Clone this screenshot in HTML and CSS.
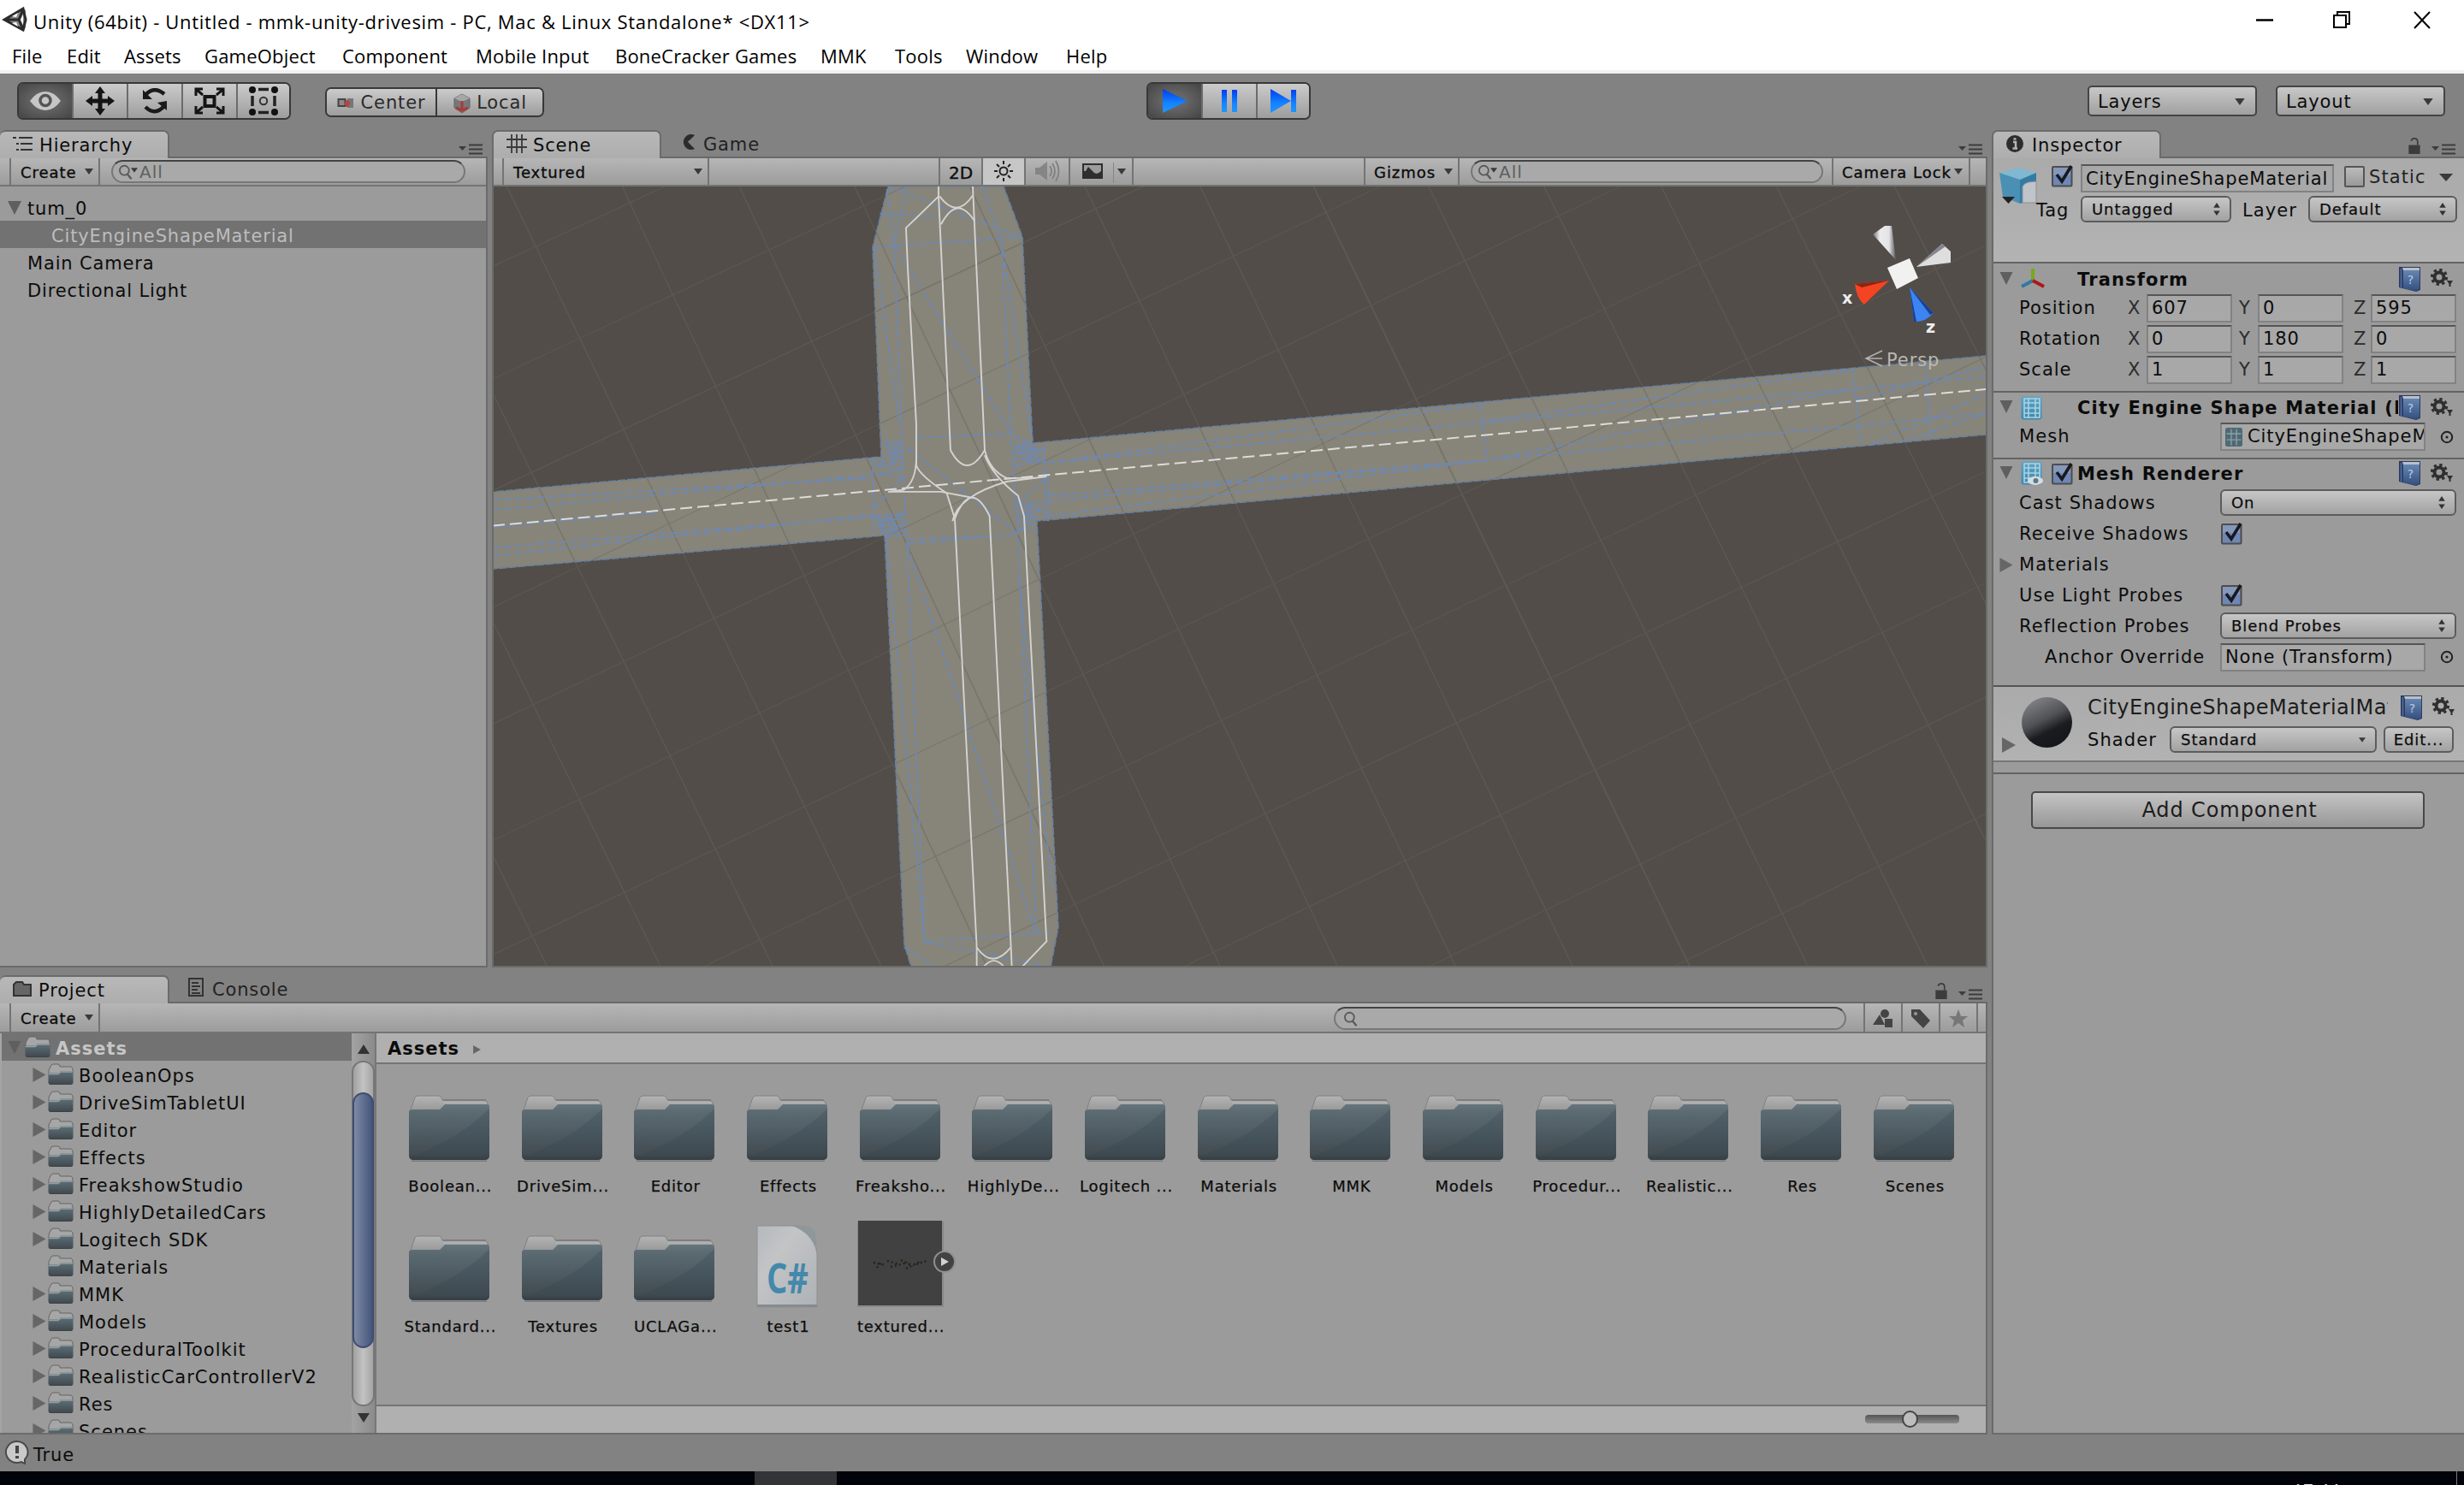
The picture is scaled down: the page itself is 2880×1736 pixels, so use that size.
FILE: index.html
```html
<!DOCTYPE html>
<html lang="en">
<head>
<meta charset="utf-8">
<title>Unity (64bit) - Untitled - mmk-unity-drivesim</title>
<link rel="stylesheet" href="styles.css">
</head>
<body>
<svg class="defs" width="0" height="0">
  <defs>
    <linearGradient id="gFolder" x1="0" y1="0" x2="0" y2="1"><stop offset="0" stop-color="#66757c"/><stop offset=".15" stop-color="#5b6a71"/><stop offset=".6" stop-color="#4b585f"/><stop offset=".9" stop-color="#434c51"/><stop offset="1" stop-color="#333d42"/></linearGradient>
    <linearGradient id="gTab" x1="0" y1="0" x2="0" y2="1"><stop offset="0" stop-color="#b4b4b4"/><stop offset="1" stop-color="#8d8d8d"/></linearGradient>
    <linearGradient id="gBlue" x1="0" y1="0" x2="0" y2="1"><stop offset="0" stop-color="#003cf0"/><stop offset=".6" stop-color="#1484ff"/><stop offset="1" stop-color="#1e96ff"/></linearGradient>
    <linearGradient id="gBook" x1="0" y1="0" x2="0" y2="1"><stop offset="0" stop-color="#6785b0"/><stop offset="1" stop-color="#344f80"/></linearGradient>
    <linearGradient id="gMesh" x1="0" y1="0" x2="0" y2="1"><stop offset="0" stop-color="#5fa4c4"/><stop offset="1" stop-color="#3f86ac"/></linearGradient>
    <linearGradient id="gBall" x1="0.2" y1="0" x2="0.7" y2="1"><stop offset="0" stop-color="#85878a"/><stop offset=".45" stop-color="#505154"/><stop offset=".68" stop-color="#1b1c20"/><stop offset="1" stop-color="#141519"/></linearGradient>
    <linearGradient id="gPage" x1="0" y1="0" x2="1" y2="1"><stop offset="0" stop-color="#b4b9bd"/><stop offset=".35" stop-color="#c3c4c6"/><stop offset="1" stop-color="#adb2b6"/></linearGradient>
    <linearGradient id="gCone" x1="0" y1="0" x2="1" y2="0"><stop offset="0" stop-color="#6c6c74"/><stop offset=".3" stop-color="#ececec"/><stop offset=".7" stop-color="#e4e4e6"/><stop offset="1" stop-color="#55555e"/></linearGradient>
    <symbol id="folder" viewBox="0 0 94 78">
      <path d="M1 20 L7 3 Q8 1 11 1 H35 Q38 1 39 6 H88 Q92 7 93 12 V26 H1Z" fill="url(#gTab)" stroke="#808080"/>
      <path d="M40 6 H90" stroke="#777" stroke-width="1.5"/>
      <path d="M40 9 H91" stroke="#b0b0b0" stroke-width="2"/>
      <path d="M0 19 Q1 17 4 17 H36 L42 11 H91 Q94 11 94 14 V72 Q93 76 89 76 H5 Q1 76 0 72Z" fill="url(#gFolder)"/>
      <path d="M94 16 V72 Q93 76 89 76 H5 Q2 76 1 73 Q60 50 92 18Z" fill="#33454f" opacity=".25"/>
      <path d="M3 77.200 H91" stroke="#7a7a7a" stroke-width="1.5"/>
    </symbol>
    <symbol id="folderS" viewBox="0 0 30 26">
      <path d="M1 8 L4 2 Q5 1 7 1 H12 Q14 1 14 4 H27 Q29 5 29 7 V12 H1Z" fill="#a6a6a6" stroke="#646464"/>
      <path d="M0.500 12 H12 L15 9 H29.500 V23 Q29 25 27 25 H3 Q1 25 .5 23Z" fill="url(#gFolder)"/>
      <path d="M1 12.500 H12 L15 10 H29" fill="none" stroke="#93a1a6" stroke-width="1.500"/>
    </symbol>
    <symbol id="right" viewBox="0 0 16 18"><path d="M0 0 L16 9 L0 18Z" fill="#666"/></symbol>
    <symbol id="down" viewBox="0 0 16 16"><path d="M0 0 H16 L8 16Z" fill="#5f5f5f"/></symbol>
    <symbol id="caret" viewBox="0 0 10 7"><path d="M0 0 H10 L5 7Z" fill="#3a3a3a"/></symbol>
    <symbol id="updown" viewBox="0 0 8 16"><path d="M0 6 L4 0 L8 6Z M0 10 L4 16 L8 10Z" fill="#333"/></symbol>
    <symbol id="menu" viewBox="0 0 28 14"><path d="M0 4 H9 L4.500 9Z" fill="#3c3c3c"/><path d="M12 2.500 H28 M12 7.500 H28 M12 12.500 H28" stroke="#3c3c3c" stroke-width="2.200"/></symbol>
    <symbol id="lock" viewBox="0 0 14 20"><path d="M0 9 H14 V20 H0Z" fill="#3c3c3c"/><path d="M3 4 Q4 1 7 1 Q11 1 11 5 V9" fill="none" stroke="#3c3c3c" stroke-width="1.800"/></symbol>
    <symbol id="mag" viewBox="0 0 24 22"><circle cx="8" cy="9" r="6" fill="none" stroke="#5a5a5a" stroke-width="2"/><path d="M12 14 L17 20" stroke="#5a5a5a" stroke-width="2.500"/></symbol>
    <symbol id="book" viewBox="0 0 26 29"><path d="M1 0 H26 V27 L21 29 L1 24Z" fill="#2b3c60"/><path d="M6 4 H25 V26 L21 28 L6 25Z" fill="url(#gBook)"/><path d="M5 1 H25 V4 H6Z" fill="#b9c0cc"/><path d="M3.500 2 V24" stroke="#5272a5" stroke-width="1.500"/><text x="14.500" y="20" text-anchor="middle" font-family="DejaVu Sans" font-size="14" letter-spacing="0" fill="#b5cbe8">?</text></symbol>
    <symbol id="gear" viewBox="0 0 28 24"><circle cx="10" cy="10" r="5.500" fill="none" stroke="#2f2f2f" stroke-width="4"/><circle cx="10" cy="10" r="8.600" fill="none" stroke="#2f2f2f" stroke-width="3" stroke-dasharray="3.370 3.380"/><path d="M19 14 H26 L23.500 18 V21 H21.500 V18Z" fill="#2f2f2f"/></symbol>
    <symbol id="check" viewBox="0 0 26 26"><rect x="1" y="2" width="22.500" height="22.500" rx="1" fill="#6f87b5" stroke="#4d4d4d" stroke-width="2"/><rect x="2" y="3" width="20" height="9" fill="#8597ba"/><path d="M6 11 L12 19 L23 1" fill="none" stroke="#17191f" stroke-width="3.600"/></symbol>
    <symbol id="mesh" viewBox="0 0 26 28"><rect x=".5" y=".5" width="24" height="27" rx="3" fill="url(#gMesh)"/><path d="M4 8 H22 M4 14 H22 M4 20 H22 M9 3 V26 M17 3 V26 M4 3 H22 V25 H4Z" stroke="#a9d3e4" stroke-width="1.600" fill="none"/></symbol>
    <symbol id="target" viewBox="0 0 16 16"><circle cx="8" cy="8" r="6.200" fill="none" stroke="#222" stroke-width="2"/><circle cx="8" cy="8" r="1.600" fill="#222"/></symbol>
  </defs>
</svg>

<header class="window-head">
  <div class="title-row">
    <svg class="logo" width="32" height="32" viewBox="0 0 32 32"><path d="M2 16 L24 3 L28 5 V25 L26 29 L22 28Z" fill="#8b8b8b"/><path d="M3 16 L25 3 L28 16 L25 28Z M3 16 H20 L25 4 M20 16 L25 28" fill="none" stroke="#2b2b2b" stroke-width="3"/><path d="M12 12 L19 8 L17 13Z M12 20 L19 24 L17 19Z M22 16 L25 10 V22Z" fill="#fff"/></svg>
    <span class="title">Unity (64bit) - Untitled - mmk-unity-drivesim - PC, Mac &amp; Linux Standalone* &lt;DX11&gt;</span>
    <svg class="winctl" width="210" height="24" viewBox="2634 10 210 24"><path d="M2637 22.500 H2657" stroke="#000" stroke-width="2.500"/><path d="M2728 17 H2742 V31 H2728Z M2732 17 V13 H2746 V27 H2742" fill="none" stroke="#000" stroke-width="2"/><path d="M2822 13 L2840 32 M2840 13 L2822 32" stroke="#000" stroke-width="2"/></svg>
  </div>
  <nav class="menus"><span>File</span><span>Edit</span><span>Assets</span><span>GameObject</span><span>Component</span><span>Mobile Input</span><span>BoneCracker Games</span><span>MMK</span><span>Tools</span><span>Window</span><span>Help</span></nav>
</header>

<div class="main-bar">
  <div class="group tools">
    <span class="btn on"><svg width="38" height="28" viewBox="0 0 38 28"><path d="M1 14 Q9 3 19 3 Q29 3 37 14 Q29 25 19 25 Q9 25 1 14Z" fill="#c6c6c6"/><circle cx="19" cy="13.500" r="6" fill="none" stroke="#555" stroke-width="3.500"/></svg></span>
    <span class="btn"><svg width="34" height="34" viewBox="0 0 34 34"><path d="M17 0 L23 8 H19.500 V14.500 H26 V11 L34 17 L26 23 V19.500 H19.500 V26 H23 L17 34 L11 26 H14.500 V19.500 H8 V23 L0 17 L8 11 V14.500 H14.500 V8 H11Z" fill="#151515"/></svg></span>
    <span class="btn"><svg width="32" height="30" viewBox="0 0 32 30"><path d="M5 8 Q15 -3 27 7 M5 22 Q16 33 27 21" fill="none" stroke="#1a1a1a" stroke-width="4.500"/><path d="M2 2 V13 H13Z M30 15 V26 L19 17Z" fill="#1a1a1a"/></svg></span>
    <span class="btn"><svg width="36" height="32" viewBox="0 0 36 32"><rect x="12.500" y="11" width="11" height="11" fill="none" stroke="#151515" stroke-width="4"/><path d="M2 10 V2 H10 M26 2 H34 V10 M2 22 V30 H10 M26 30 H34 V22 M3 3 L10 9 M33 3 L26 9 M3 29 L10 23 M33 29 L26 23" stroke="#151515" stroke-width="3" fill="none"/></svg></span>
    <span class="btn"><svg width="34" height="34" viewBox="0 0 34 34"><path d="M11 3.500 H23 M11 30.500 H23 M4 11 V23 M30 11 V23" fill="none" stroke="#222" stroke-width="3.500"/><circle cx="4" cy="4" r="4" fill="#111"/><circle cx="30" cy="4" r="4" fill="#111"/><circle cx="4" cy="30" r="4" fill="#111"/><circle cx="30" cy="30" r="4" fill="#111"/><circle cx="17" cy="17" r="4.200" fill="none" stroke="#333" stroke-width="2"/></svg></span>
  </div>
  <div class="group pivot">
    <span class="btn w-center"><svg width="22" height="16" viewBox="0 0 22 16"><rect x="1.500" y="3" width="8" height="8" fill="#8b8b8b" stroke="#444" stroke-width="2"/><rect x="12" y="2" width="7" height="11" fill="#777"/><path d="M12 4 V12 M8 8 H15" stroke="#b34343" stroke-width="3"/></svg>Center</span><span class="btn w-local"><svg width="22" height="26" viewBox="0 0 22 26"><path d="M2 7 L11 2 L20 7 V18 L11 24 L2 18Z" fill="#777" stroke="#666"/><path d="M2 7 L11 2 L20 7 L11 11Z" fill="#a6a6a6"/><path d="M11 10 V19 M4 18 L11 21 L18 18" stroke="#a63c3c" stroke-width="3" fill="none"/></svg>Local</span>
  </div>
  <div class="group play">
    <span class="btn on"><svg width="32" height="30" viewBox="0 0 32 30"><path d="M2 1 L31 15 L2 29Z" fill="url(#gBlue)"/></svg></span>
    <span class="btn"><svg width="20" height="28" viewBox="0 0 20 28"><path d="M1 1 H7 V27 H1Z M13 1 H19 V27 H13Z" fill="url(#gBlue)"/></svg></span>
    <span class="btn"><svg width="32" height="30" viewBox="0 0 32 30"><path d="M1 1 L25 15 L1 29Z M25 2 H31 V28 H25Z" fill="url(#gBlue)"/></svg></span>
  </div>
  <div class="drops"><span class="drop">Layers<svg width="12" height="8"><use href="#caret"/></svg></span><span class="drop">Layout<svg width="12" height="8"><use href="#caret"/></svg></span></div>
</div>

<main class="work">
  <div class="left">
    <div class="upper">
      <section class="panel hierarchy">
        <div class="tabs"><span class="tab w196"><svg width="24" height="18" viewBox="0 0 24 18"><path d="M0 2 H4 M7 2 H23 M4 9 H7 M9 9 H23 M4 16 H7 M9 16 H23" stroke="#333" stroke-width="2"/></svg><b class="t">Hierarchy</b></span><svg class="pm" width="28" height="14"><use href="#menu"/></svg></div>
        <div class="strip"><span class="cell create">Create<svg width="10" height="7"><use href="#caret"/></svg></span><span class="search hs"><svg width="22" height="20"><use href="#mag"/></svg><svg class="mc" width="8" height="6"><use href="#caret"/></svg>All</span></div>
        <div class="list">
          <div class="item"><svg width="16" height="16"><use href="#down"/></svg><span>tum_0</span></div>
          <div class="item sel"><span>CityEngineShapeMaterial</span></div>
          <div class="item flat"><span>Main Camera</span></div>
          <div class="item flat"><span>Directional Light</span></div>
        </div>
      </section>
      <section class="panel scene">
        <div class="tabs"><span class="tab w196"><svg width="24" height="24" viewBox="0 0 24 24"><path d="M6 1 V23 M12 1 V23 M18 1 V23 M0 7 H24 M0 16 H24" stroke="#3a3a3a" stroke-width="1.800"/></svg><b class="t">Scene</b></span><span class="tab ghost"><svg width="18" height="20" viewBox="0 0 18 20"><path d="M17 2 A9 9 0 1 0 17 18 L10 11 Q8 9 11 8Z" fill="#2c2c2c"/></svg><b class="t">Game</b></span><svg class="pm" width="28" height="14"><use href="#menu"/></svg></div>
        <div class="strip">
          <span class="cell shade">Textured<svg width="10" height="7"><use href="#caret"/></svg></span>
          <span class="cell c2d">2D</span>
          <span class="cell lit"><svg width="24" height="24" viewBox="0 0 24 24"><circle cx="12" cy="12" r="4.500" fill="none" stroke="#222" stroke-width="2"/><path d="M12 0 V4 M12 20 V24 M1 12 H5 M19 12 H23 M4 4 L7 7 M17 17 L20 20 M4 20 L7 17 M17 7 L20 4" stroke="#222" stroke-width="2"/></svg></span>
          <span class="cell c52"><svg width="30" height="26" viewBox="0 0 30 26"><path d="M1 9 H6 L15 2 V24 L6 17 H1Z" fill="#858585"/><path d="M18 7 Q22 13 18 19 M21 4 Q27 13 21 22 M25 1 Q32 13 25 25" fill="none" stroke="#808080" stroke-width="1.800"/></svg></span>
          <span class="cell fx"><svg width="24" height="18" viewBox="0 0 24 18"><rect width="24" height="18" fill="#2e2e2e"/><path d="M2 2 H22 V9 Q16 15 12 9 L7 4 L4 9 H2Z" fill="#9c9c9c"/></svg><i></i><svg width="10" height="7"><use href="#caret"/></svg></span>
          <span class="cell giz">Gizmos<svg width="10" height="7"><use href="#caret"/></svg></span>
          <span class="search ss"><svg width="22" height="20"><use href="#mag"/></svg><svg class="mc" width="8" height="6"><use href="#caret"/></svg>All</span>
          <span class="cell cam">Camera Lock<svg width="10" height="7"><use href="#caret"/></svg></span>
        </div>
        <svg class="view" viewBox="577 218 1744 911" width="1744" height="911" preserveAspectRatio="none">
          <rect x="576" y="218" width="1746" height="911" fill="#524d48"/>
          <defs>
            <g id="grid" fill="none">
              <path d="M-335 30 L62 1568 M-215 30 L180 1568 M-100 30 L297 1568 M20 30 L410 1568 M140 30 L520 1568 M262 30 L642 1568 M382 30 L763 1568 M502 30 L885 1568 M622 30 L1008 1568 M742 30 L1130 1568 M980 30 L1375 1568 M1100 30 L1500 1568 M1222 30 L1625 1568 M1342 30 L1750 1568 M1465 30 L1870 1568"/>
              <path d="M860 30 L1252 1568" stroke-width="2"/>
              <path d="M5 188 L185 30 M5 410 L435 30 M5 860 L930 30 M5 1090 L1180 30 M5 1320 L1430 30 M5 1545 L1562 145 M225 1568 L1562 365 M475 1568 L1562 590 M725 1568 L1562 810 M980 1568 L1562 1035 M1235 1568 L1562 1265"/>
              <path d="M5 630 L683 30" stroke-width="2"/>
            </g>
            <path id="roads" d="M1038 218 H1173 L1195 277 L1207 518 L2322 416 V508 L1212 609 L1237 1084 L1228 1130 H1065 L1057 1104 L1034 626 L576 665 V575 L1030 534 L1020 289Z"/>
            <clipPath id="roadClip"><use href="#roads"/></clipPath>
          </defs>
          <g transform="translate(570 200) scale(1.1224 .5931)" stroke="#5c5852" class="thin"><use href="#grid"/></g>
          <use href="#roads" fill="#87847a"/>
          <g clip-path="url(#roadClip)">
            <g transform="translate(570 200) scale(1.1224 .5931)" stroke="#777469" class="thin"><use href="#grid"/></g>
          </g>
          <use href="#roads" fill="none" stroke="#69809f" stroke-width="1.600" stroke-dasharray="9 2"/>
          <g class="blue" transform="translate(960 200) scale(.3333 .5931)" fill="none">
            <path d="M300 30 L255 145 L285 560 L300 735 L362 1520 M565 30 L632 135 L665 518 L690 725 L753 1505"/>
            <path d="M185 150 L272 490 M632 135 L740 530 M228 725 L362 1520 M692 800 L810 1420 M232 30 L700 130"/>
            <path d="M185 150 L700 130 M205 85 L410 90 M335 525 L665 518 M300 735 L690 715 M300 725 L560 720 M362 1520 L800 1500 M362 1520 L800 1568"/>
            <path d="M255 145 L665 515 M300 545 L690 715 M300 735 L753 1505 M230 35 L255 145 M180 565 L185 720 M783 540 L785 688 M795 600 L795 690"/>
            <path d="M215 530 L285 535 L225 545 L290 550 L222 558 L285 565 L175 572 L290 575 L185 582 L285 588 L190 598 L290 603 M670 520 L745 540 L672 545 L783 548 L675 555 L783 562 L675 568 L783 572 L675 580 M185 680 L295 675 L190 690 L290 685 L190 700 L298 696 L205 710 L300 706 L215 720 L300 718 M683 650 L770 655 L685 662 L780 668 L685 675 L760 682 L685 690 L755 696 L690 705 L750 710"/>
            <path d="M230 535 L240 560 L250 535 L262 570 L272 535 M690 525 L700 560 L715 530 L730 575 L745 540 L765 575 M200 680 L215 712 L230 680 L250 715 L270 680 M700 655 L712 700 L730 655 L745 690"/>
            <path d="M183 665 L283 605 M683 660 L783 605 M290 1530 L400 1568"/>
          </g>
          <g class="blue" transform="translate(570 200) scale(1.1224 .5931)" fill="none">
            <path d="M5 648 L400 605 M5 668 L400 600 M5 702 L180 672 M5 742 L410 680 M5 758 L400 678"/>
            <path d="M583 575 L1560 405 M583 575 L1035 460 M583 650 L1560 478 M583 640 L1040 570 L1420 430 M583 680 L1040 570 M1033 458 L1041 570 M1041 492 L1420 392 M1421 388 L1430 540 M1497 378 L1503 525 M1440 540 L1560 440 M1470 535 L1560 478 M1425 450 L1560 385"/>
          </g>
          <path d="M576 614.600 L2322 455" stroke="#dddcd8" stroke-width="2" stroke-dasharray="14 6"/>
          <g class="white" transform="translate(960 200) scale(.3333 .5931)" fill="none">
            <path d="M411 30 V50 L297 112 L303 190 L333 500 V580 Q345 600 440 635 L468 685 L545 1530 V1568"/>
            <path d="M333 560 Q335 610 290 628 L235 632 M411 48 L453 550 Q510 610 573 550 L531 30"/>
            <path d="M415 50 Q475 95 531 48 M420 105 Q475 45 537 98"/>
            <path d="M573 550 Q590 590 650 605 L740 605 M573 560 Q600 600 690 640 L711 680 L787 1490 L790 1518 L705 1568"/>
            <path d="M468 685 Q525 605 590 680 L665 1530 L668 1568 M460 690 Q480 640 650 612 L790 602 M235 632 H420 L540 645 M545 1530 Q600 1575 665 1530 M570 1568 Q605 1545 640 1568"/>
          </g>
          <path d="M2189 274 L2203 264 H2211 L2216 304Z" fill="url(#gCone)"/>
          <path d="M2240 312 L2270 285 L2280 294 V307Z" fill="#dededf"/><path d="M2240 312 L2270 285 L2274 288Z" fill="#85858c"/>
          <path d="M2206 313 L2232 302 L2242 325 L2217 338Z" fill="#f1f1f0"/>
          <path d="M2168 332 L2208 328 L2179 356 Q2170 349 2168 332Z" fill="#f44423"/><path d="M2168 332 L2208 328 L2176 336Z M2208 328 L2184 351 L2179 356Z" fill="#8f2412"/>
          <path d="M2232 336 L2260 366 Q2250 377 2237 376Z" fill="#3c84f2"/><path d="M2232 336 L2260 366 L2256 368Z M2232 336 L2237 376 L2240 376Z" fill="#1b3f91"/>
          <text x="2153" y="355" font-family="DejaVu Sans" font-weight="bold" font-size="19" fill="#eee">x</text>
          <text x="2251" y="389" font-family="DejaVu Sans" font-weight="bold" font-size="19" fill="#eee">z</text>
          <path d="M2200 410 L2181 419 L2200 428 M2181 419 H2200" fill="none" stroke="#b5b3af" stroke-width="1.500"/>
          <text x="2205" y="428" font-family="DejaVu Sans" font-size="21" letter-spacing=".9" fill="#b9b8b4">Persp</text>
        </svg>
      </section>
    </div>

    <section class="panel project">
      <div class="tabs"><span class="tab w196"><svg width="22" height="18" viewBox="0 0 22 18"><path d="M1 4 L4 1 H11 L13 4 H21 V17 H1Z" fill="#666" stroke="#333" stroke-width="2"/></svg><b class="t">Project</b></span><span class="tab ghost con"><svg width="18" height="22" viewBox="0 0 18 22"><path d="M1 1 H17 V21 H1Z M4 6 H12 M4 10 H14 M4 14 H11 M4 18 H14" fill="none" stroke="#333" stroke-width="2"/></svg><b class="t">Console</b></span><svg class="lk" width="14" height="19"><use href="#lock"/></svg><svg class="pm nm" width="28" height="14"><use href="#menu"/></svg></div>
      <div class="strip"><span class="cell create">Create<svg width="10" height="7"><use href="#caret"/></svg></span>
        <span class="search ps"><svg width="22" height="20"><use href="#mag"/></svg></span>
        <span class="cell sq"><svg width="24" height="24" viewBox="0 0 24 24"><circle cx="14" cy="6" r="5" fill="#444"/><path d="M0 19 L8 7 L14 19Z M14 12 H23 V22 H14Z" fill="#444"/></svg></span>
        <span class="cell sq"><svg width="24" height="24" viewBox="0 0 24 24"><path d="M1 1 H11 L23 14 L15 23 L1 9Z" fill="#444"/><circle cx="6" cy="6" r="2" fill="#999"/></svg></span>
        <span class="cell sq last"><svg width="24" height="22" viewBox="0 0 24 22"><path d="M12 0 L15 8 H23 L17 13 L19 21 L12 16 L5 21 L7 13 L1 8 H9Z" fill="#777"/></svg></span>
      </div>
      <div class="proj-body">
        <div class="tree">
          <div class="node root"><svg width="16" height="15"><use href="#down"/></svg><svg width="30" height="26"><use href="#folderS"/></svg><b>Assets</b></div>
          <div class="node"><svg width="16" height="17"><use href="#right"/></svg><svg width="30" height="26"><use href="#folderS"/></svg><span>BooleanOps</span></div>
          <div class="node"><svg width="16" height="17"><use href="#right"/></svg><svg width="30" height="26"><use href="#folderS"/></svg><span>DriveSimTabletUI</span></div>
          <div class="node"><svg width="16" height="17"><use href="#right"/></svg><svg width="30" height="26"><use href="#folderS"/></svg><span>Editor</span></div>
          <div class="node"><svg width="16" height="17"><use href="#right"/></svg><svg width="30" height="26"><use href="#folderS"/></svg><span>Effects</span></div>
          <div class="node"><svg width="16" height="17"><use href="#right"/></svg><svg width="30" height="26"><use href="#folderS"/></svg><span>FreakshowStudio</span></div>
          <div class="node"><svg width="16" height="17"><use href="#right"/></svg><svg width="30" height="26"><use href="#folderS"/></svg><span>HighlyDetailedCars</span></div>
          <div class="node"><svg width="16" height="17"><use href="#right"/></svg><svg width="30" height="26"><use href="#folderS"/></svg><span>Logitech SDK</span></div>
          <div class="node"><svg width="16" height="17"></svg><svg width="30" height="26"><use href="#folderS"/></svg><span>Materials</span></div>
          <div class="node"><svg width="16" height="17"><use href="#right"/></svg><svg width="30" height="26"><use href="#folderS"/></svg><span>MMK</span></div>
          <div class="node"><svg width="16" height="17"><use href="#right"/></svg><svg width="30" height="26"><use href="#folderS"/></svg><span>Models</span></div>
          <div class="node"><svg width="16" height="17"><use href="#right"/></svg><svg width="30" height="26"><use href="#folderS"/></svg><span>ProceduralToolkit</span></div>
          <div class="node"><svg width="16" height="17"><use href="#right"/></svg><svg width="30" height="26"><use href="#folderS"/></svg><span>RealisticCarControllerV2</span></div>
          <div class="node"><svg width="16" height="17"><use href="#right"/></svg><svg width="30" height="26"><use href="#folderS"/></svg><span>Res</span></div>
          <div class="node"><svg width="16" height="17"><use href="#right"/></svg><svg width="30" height="26"><use href="#folderS"/></svg><span>Scenes</span></div>
        </div>
        <div class="scroll"><svg width="14" height="11" viewBox="0 0 14 11"><path d="M0 11 H14 L7 0Z" fill="#333"/></svg><div class="track"><div class="thumb"></div></div><svg width="14" height="11" viewBox="0 0 14 11"><path d="M0 0 H14 L7 11Z" fill="#333"/></svg></div>
        <div class="files">
          <div class="crumb"><b>Assets</b><svg width="11" height="10"><use href="#right"/></svg></div>
          <div class="tiles">
            <div class="tile"><svg width="94" height="78"><use href="#folder"/></svg><span>Boolean...</span></div>
            <div class="tile"><svg width="94" height="78"><use href="#folder"/></svg><span>DriveSim...</span></div>
            <div class="tile"><svg width="94" height="78"><use href="#folder"/></svg><span>Editor</span></div>
            <div class="tile"><svg width="94" height="78"><use href="#folder"/></svg><span>Effects</span></div>
            <div class="tile"><svg width="94" height="78"><use href="#folder"/></svg><span>Freaksho...</span></div>
            <div class="tile"><svg width="94" height="78"><use href="#folder"/></svg><span>HighlyDe...</span></div>
            <div class="tile"><svg width="94" height="78"><use href="#folder"/></svg><span>Logitech ...</span></div>
            <div class="tile"><svg width="94" height="78"><use href="#folder"/></svg><span>Materials</span></div>
            <div class="tile"><svg width="94" height="78"><use href="#folder"/></svg><span>MMK</span></div>
            <div class="tile"><svg width="94" height="78"><use href="#folder"/></svg><span>Models</span></div>
            <div class="tile"><svg width="94" height="78"><use href="#folder"/></svg><span>Procedur...</span></div>
            <div class="tile"><svg width="94" height="78"><use href="#folder"/></svg><span>Realistic...</span></div>
            <div class="tile"><svg width="94" height="78"><use href="#folder"/></svg><span>Res</span></div>
            <div class="tile"><svg width="94" height="78"><use href="#folder"/></svg><span>Scenes</span></div>
            <div class="tile"><svg width="94" height="78"><use href="#folder"/></svg><span>Standard...</span></div>
            <div class="tile"><svg width="94" height="78"><use href="#folder"/></svg><span>Textures</span></div>
            <div class="tile"><svg width="94" height="78"><use href="#folder"/></svg><span>UCLAGa...</span></div>
            <div class="tile"><svg width="72" height="98" viewBox="0 0 72 98"><path d="M1 1 H50 Q64 1 68 8 L71 34 V96 H1Z" fill="url(#gPage)" stroke="#8c8f91"/><path d="M42 1 Q62 1 68 6 L70 32 Q66 10 42 1Z" fill="#8e979c"/><path d="M1 94.500 H71" stroke="#858b8f" stroke-width="3"/><text x="12" y="80" class="cs" textLength="49" lengthAdjust="spacingAndGlyphs" fill="#4488ab">C#</text></svg><span>test1</span></div>
            <div class="tile"><svg class="tex" width="116" height="104" viewBox="0 0 116 104"><rect x="1" y="2" width="101" height="100" fill="#8a8a8a"/><rect x="2" y="1" width="98" height="99" fill="#414141"/><path d="M20 50 L34 53 M36 48 L50 52 M40 55 L60 50 M52 47 L66 54 M58 57 L74 49 M70 52 L82 48 M24 56 L30 49" stroke="#24241b" stroke-width="2.500" stroke-dasharray="2 3"/><circle cx="103" cy="49" r="12" fill="#424242" stroke="#8f8f8f" stroke-width="2"/><path d="M99 44 L108 49 L99 54Z" fill="#d2d2d2"/></svg><span>textured...</span></div>
          </div>
          <div class="foot"><div class="slider"><i></i></div></div>
        </div>
      </div>
    </section>
  </div>

  <section class="panel inspector">
    <div class="tabs"><span class="tab w196"><svg width="20" height="20" viewBox="0 0 20 20"><circle cx="10" cy="10" r="10" fill="#2d2d2d"/><path d="M8 8 H11 V15 M7.500 15.500 H13 M8.500 4.500 H11.500" stroke="#b5b5b5" stroke-width="2.500" fill="none"/></svg><b class="t">Inspector</b></span><svg class="lk" width="14" height="19"><use href="#lock"/></svg><svg class="pm nm" width="28" height="14"><use href="#menu"/></svg></div>
    <div class="obj">
      <div class="cube"><svg width="46" height="44" viewBox="0 0 46 44"><path d="M0 6 L22 0 L43 6 L24 14Z" fill="#7fb8d0"/><path d="M0 6 L24 14 V42 L4 34Z" fill="#4a90b4"/><path d="M24 14 L43 6 V36 L24 42Z" fill="#347ba3"/><path d="M27 22 Q29 18 34 17 L43 16 V41 H27Z" fill="#c0c4c9" stroke="#8a9096"/><path d="M3 34 H18 L10.500 42Z" fill="#222"/></svg></div>
      <div class="obj-main">
        <div class="orow"><svg width="26" height="26"><use href="#check"/></svg><span class="input oname">CityEngineShapeMaterial</span><span class="box"></span><span class="lab">Static</span><svg class="sc" width="16" height="9" viewBox="0 0 10 7" preserveAspectRatio="none"><use href="#caret"/></svg></div>
        <div class="orow2"><span class="lab tag">Tag</span><span class="select s176">Untagged<svg width="8" height="15"><use href="#updown"/></svg></span><span class="lab lay">Layer</span><span class="select s174">Default<svg width="8" height="15"><use href="#updown"/></svg></span></div>
      </div>
    </div>
    <div class="comp tr">
      <div class="ctitle"><svg width="16" height="15"><use href="#down"/></svg><span class="ci"><svg width="28" height="26" viewBox="0 0 28 26"><path d="M14 1 V15" stroke="#78a81c" stroke-width="4"/><path d="M14 15 L1 22" stroke="#2f79a6" stroke-width="4"/><path d="M14 15 L27 22" stroke="#b01616" stroke-width="4"/></svg></span><b>Transform</b><svg width="26" height="29"><use href="#book"/></svg><svg width="28" height="24"><use href="#gear"/></svg></div>
      <div class="vec"><span>Position</span><em>X</em><span class="input">607</span><em>Y</em><span class="input">0</span><em>Z</em><span class="input">595</span></div>
      <div class="vec"><span>Rotation</span><em>X</em><span class="input">0</span><em>Y</em><span class="input">180</span><em>Z</em><span class="input">0</span></div>
      <div class="vec"><span>Scale</span><em>X</em><span class="input">1</span><em>Y</em><span class="input">1</span><em>Z</em><span class="input">1</span></div>
    </div>
    <div class="comp mf">
      <div class="ctitle"><svg width="16" height="15"><use href="#down"/></svg><span class="ci"><svg width="26" height="28"><use href="#mesh"/></svg></span><b>City Engine Shape Material (Mesh Filter)</b><svg width="26" height="29"><use href="#book"/></svg><svg width="28" height="24"><use href="#gear"/></svg></div>
      <div class="prop"><span>Mesh</span><span class="input obj-in"><svg width="20" height="22" viewBox="0 0 26 28" preserveAspectRatio="none"><rect width="26" height="28" rx="3" fill="#4f6974"/><path d="M9 2 V26 M17 2 V26 M2 9 H24 M2 18 H24" stroke="#8ba0a8" stroke-width="1.800"/></svg>CityEngineShapeMaterial</span><svg width="16" height="16"><use href="#target"/></svg></div>
    </div>
    <div class="comp mr">
      <div class="ctitle"><svg width="16" height="15"><use href="#down"/></svg><span class="ci"><svg width="26" height="29" viewBox="0 0 26 29"><use href="#mesh" width="26" height="28"/><ellipse cx="17" cy="23" rx="9" ry="5" fill="#d5dde2"/><circle cx="17.500" cy="23" r="3" fill="#5c7886"/></svg><svg class="ck" width="26" height="26"><use href="#check"/></svg></span><b>Mesh Renderer</b><svg width="26" height="29"><use href="#book"/></svg><svg width="28" height="24"><use href="#gear"/></svg></div>
      <div class="prop"><span>Cast Shadows</span><span class="select wide">On<svg width="8" height="15"><use href="#updown"/></svg></span></div>
      <div class="prop"><span>Receive Shadows</span><svg class="cb" width="26" height="26"><use href="#check"/></svg></div>
      <div class="prop fold"><svg width="16" height="17"><use href="#right"/></svg><span>Materials</span></div>
      <div class="prop"><span>Use Light Probes</span><svg class="cb" width="26" height="26"><use href="#check"/></svg></div>
      <div class="prop"><span>Reflection Probes</span><span class="select wide">Blend Probes<svg width="8" height="15"><use href="#updown"/></svg></span></div>
      <div class="prop"><span class="ind">Anchor Override</span><span class="input obj-in">None (Transform)</span><svg width="16" height="16"><use href="#target"/></svg></div>
    </div>
    <div class="mat">
      <svg class="mfold" width="16" height="18"><use href="#right"/></svg>
      <svg class="ball" width="61" height="61" viewBox="0 0 61 61"><circle cx="30.500" cy="30.500" r="29.500" fill="url(#gBall)"/></svg>
      <div class="mat-main">
        <div class="mrow"><span class="mname">CityEngineShapeMaterialMaterial</span><svg width="26" height="29"><use href="#book"/></svg><svg width="28" height="24"><use href="#gear"/></svg></div>
        <div class="mrow2"><span class="lab">Shader</span><span class="select shader">Standard<svg width="8" height="6"><use href="#caret"/></svg></span><span class="select edit">Edit...</span></div>
      </div>
    </div>
    <div class="gapbar"></div>
    <div class="add">Add Component</div>
  </section>
</main>

<footer class="status"><svg width="30" height="28" viewBox="0 0 30 28"><path d="M15 1 A13 12.500 0 1 0 20 25 L24 27 V22 A13 12.500 0 0 0 15 1Z" fill="#c9c9c9" stroke="#4a4a4a" stroke-width="2"/><path d="M15 6 V15 M15 18 V21" stroke="#444" stroke-width="4"/></svg>True</footer>
<div class="taskbar"><span class="active"></span><span class="clock">17:44</span><span class="edge"></span></div>
</body>
</html>
```
FILE: styles.css
```css
* { box-sizing: border-box; }
html, body { margin: 0; padding: 0; }
body { width: 2880px; height: 1736px; overflow: hidden; display: flex; flex-direction: column; background: #828282; font: 21px/1 "DejaVu Sans", sans-serif; letter-spacing: .85px; color: #0c0c0c; white-space: nowrap; }
svg { display: block; flex: none; }
.defs { position: absolute; }
b { font-weight: bold; }
em { font-style: normal; color: #2c2c2c; }

.window-head { height: 86px; flex: none; background: #fff; border-bottom: 4px solid #f0f0f0; font-family: "Open Sans", "Noto Sans", sans-serif; font-size: 22px; letter-spacing: 0; color: #000; }
.title-row { height: 48px; display: flex; align-items: center; padding: 0 36px 3px 2px; }
.title { margin-left: 5px; padding-top: 4px; letter-spacing: .7px; }
.winctl { margin-left: auto; }
.menus { height: 34px; padding-left: 14px; display: grid; grid-template-columns: 64px 67px 94px 161px 156px 163px 240px 87px 83px 117px 80px; align-items: center; letter-spacing: .2px; }

.main-bar { height: 65px; flex: none; display: grid; grid-template-columns: 360px 960px 1100px 1fr; padding: 10px 0 0 20px; align-items: start; }
.group { display: flex; border: 2px solid #383838; border-radius: 7px; overflow: hidden; width: max-content; }
.btn { display: flex; align-items: center; justify-content: center; background: linear-gradient(#cbcbcb, #9d9d9d); border-left: 2px solid #6b6b6b; }
.btn:first-child { border-left: 0; }
.btn.on { background: radial-gradient(#666 30%, #444); }
.tools .btn { width: 64px; height: 40px; }
.tools .btn:last-child, .tools .btn:first-child { width: 62px; }
.pivot { margin-top: 6px; }
.pivot .btn { height: 31px; gap: 6px; color: #2a2a2a; padding-top: 2px; }
.w-center { width: 127px; }
.pivot .w-local { width: 125px; border-color: #383838; }
.play .btn { width: 64px; height: 40px; }
.play .btn:first-child { width: 62px; }
.play .btn:last-child { width: 62px; }
.drops { display: flex; gap: 22px; padding-top: 4px; }
.drop { width: 198px; height: 36px; border: 2px solid #444; border-radius: 5px; background: linear-gradient(#c8c8c8, #a0a0a0); display: flex; align-items: center; justify-content: space-between; padding: 2px 12px 0 10px; }

.work { height: 1526px; flex: none; display: flex; gap: 5px; }
.left { width: 2323px; display: flex; flex-direction: column; gap: 8px; }
.upper { height: 980px; display: flex; gap: 5px; }
.panel { display: flex; flex-direction: column; background: #9b9b9b; border: 2px solid #6b6b6b; border-top: 0; }
.tabs { height: 34px; flex: none; display: flex; align-items: flex-end; background: #828282; border-bottom: 2px solid #696969; margin: 0 -2px; padding-right: 6px; }
.tab { height: 32px; display: flex; align-items: center; gap: 9px; padding-left: 15px; }
.tab.w196 { width: 198px; height: 33px; margin-bottom: -2px; background: linear-gradient(#b8b8b8, #adadad); border: 2px solid #6b6b6b; border-bottom: 0; border-radius: 7px 7px 0 0; }
.t { font-weight: normal; padding-top: 2px; }
.tab svg { margin-top: -3px; }
.ghost { color: #222; padding-left: 22px; }
.ghost .t { padding-top: 5px; }
.pm { margin-left: auto; margin-bottom: 2px; }
.lk { margin-left: auto; margin-bottom: 3px; }
.pm.nm { margin-left: 13px; }
.strip { height: 33px; flex: none; display: flex; background: linear-gradient(#b6b6b6, #9c9c9c); border-bottom: 2px solid #747474; font-size: 18px; letter-spacing: .95px; -webkit-text-stroke: .35px #0c0c0c; }
.cell { display: flex; align-items: center; justify-content: space-between; border-left: 2px solid #747474; border-right: 2px solid #747474; padding: 3px 6px 0 11px; }
.cell svg { margin-top: -4px; }
.search { height: 27px; margin-top: 2px; border: 2px solid #777; border-top-color: #444; border-radius: 14px; background: #a9a9a9; display: flex; align-items: center; padding-left: 6px; color: #5f5f5f; font-size: 20px; letter-spacing: 1px; -webkit-text-stroke: 0; }
.mc { margin: -4px 2px 0 -7px; }

.hierarchy { width: 570px; border-left: 0; }
.hierarchy .tabs { margin-left: 0; }
.hierarchy .tab { border-left: 0; gap: 7px; }
.create { width: 106px; margin-left: 11px; }
.hs { width: 414px; margin-left: 13px; }
.list { padding-top: 8px; }
.item { height: 32px; display: flex; align-items: center; padding: 4px 0 0 9px; gap: 7px; }
.item svg { margin-top: -3px; }
.item.flat { padding-left: 32px; }
.item.sel { padding-left: 60px; background: #727272; color: #bdbdbd; }

.scene { width: 1748px; }
.scene .tab.w196 { gap: 7px; }
.shade { width: 242px; margin-left: 10px; }
.c2d { width: 52px; margin-left: 268px; font-size: 20px; padding: 2px 0 0; justify-content: center; letter-spacing: 0; }
.lit { width: 52px; margin-left: -2px; background: #c6c6c6; padding: 3px 0 0; justify-content: center; }
.c52 { width: 54px; margin-left: -2px; padding: 3px 0 0; justify-content: center; }
.fx { width: 76px; margin-left: -2px; padding: 3px 7px 0 14px; }
.fx i { width: 1px; height: 24px; background: #858585; margin-left: 8px; }
.giz { width: 112px; margin-left: 269px; padding-left: 10px; }
.ss { width: 412px; margin-left: 13px; }
.cam { width: 162px; margin-left: 10px; padding: 3px 7px 0 10px; }
.view { display: block; }
.thin path { vector-effect: non-scaling-stroke; }
.thin { stroke-width: 1.4; }
.blue { stroke: #6b89b8; stroke-width: 1.7; }
.blue path { vector-effect: non-scaling-stroke; stroke-dasharray: 9 4; }
.white { stroke: #d4d3d1; stroke-width: 1.9; }
.white path { vector-effect: non-scaling-stroke; }

.project { height: 538px; border-left: 0; }
.project .tabs { margin-left: 0; }
.project .tab.w196 { border-left: 0; gap: 8px; }
.project .strip { height: 35px; }
.con { padding-left: 22px; gap: 10px; }
.ps { width: 599px; margin-left: 1442px; margin-top: 4px; }
.ps svg { margin-left: 3px; }
.sq { width: 46px; margin-right: -2px; padding: 3px 0 0; justify-content: center; }
.ps + .sq { margin-left: 20px; }
.sq svg { margin: 0; }
.proj-body { flex: 1; min-height: 0; display: flex; }
.tree { width: 411px; overflow: hidden; border-left: 2px solid #a5a5a5; letter-spacing: 1px; }
.node { height: 32px; display: flex; align-items: center; padding: 0 0 0 36px; }
.node svg + svg { margin: 0 6px 0 2px; }
.node span, .node b { padding-top: 5px; }
.node.root { padding-left: 7px; background: #727272; color: #c6c6c6; }
.node.root svg + svg { margin-left: 4px; }
.scroll { width: 29px; background: linear-gradient(90deg, #a3a3a3, #8b8b8b); display: flex; flex-direction: column; align-items: center; border-right: 2px solid #777; padding: 13px 0 12px; gap: 8px; }
.track { flex: 1; width: 27px; border: 2px solid #777; border-radius: 13px; background: linear-gradient(90deg, #a0a0a0, #c2c2c2 50%, #a5a5a5); padding-top: 35px; }
.thumb { height: 299px; margin: 0 -1px; border: 2px solid #3f4d70; border-radius: 13px; background: linear-gradient(90deg, #7d8aa5, #46557c); }
.files { flex: 1; display: flex; flex-direction: column; }
.crumb { height: 36px; display: flex; align-items: center; gap: 15px; padding: 3px 0 0 13px; background: #b0b0b0; border-bottom: 2px solid #747474; letter-spacing: 1px; }
.tiles { height: 398px; padding: 36px 0 0 19px; display: grid; grid-template-columns: repeat(14, 131.7px); grid-auto-rows: 164px; }
.tile { display: grid; grid-template-rows: 78px 1fr; justify-items: center; align-items: end; align-content: start; height: 120px; font-size: 18px; letter-spacing: .8px; -webkit-text-stroke: .25px #0c0c0c; }
.tile span { align-self: end; margin: 0 0 4px 3px; }
.tile svg { overflow: visible; }
.tile .tex { margin: 0 -15px 0 0; }
.tile svg[width="72"], .tile .tex { margin-bottom: -8px; }
.cs { font: bold 48px "Open Sans", sans-serif; letter-spacing: 0; -webkit-text-stroke: 0; }
.foot { flex: 1; background: #b0b0b0; border-top: 2px solid #747474; display: flex; justify-content: flex-end; align-items: center; padding: 0 31px 2px 0; }
.slider { width: 110px; height: 10px; border-radius: 4px; background: linear-gradient(#555, #8a8a8a); display: flex; align-items: center; padding-left: 43px; }
.slider i { width: 19px; height: 20px; border-radius: 50%; border: 2px solid #444; background: #bdbdbd; }

.inspector { width: 552px; border-right: 0; }
.inspector .tabs { margin-right: 0; padding-right: 10px; }
.inspector .tab { gap: 10px; }
.obj { height: 121px; background: linear-gradient(#aaa, #b3b3b3); display: flex; padding: 7px 0 0 7px; }
.cube { width: 61px; padding-top: 4px; }
.obj-main { flex: 1; }
.orow { display: flex; align-items: flex-start; }
.orow > svg:first-child { margin-top: 1px; }
.input { height: 33px; border: 2px solid #828282; border-top-color: #555; background: #a8a8a8; display: flex; align-items: center; padding: 2px 0 0 4px; overflow: hidden; }
.oname { width: 296px; margin-left: 8px; letter-spacing: .82px; }
.box { width: 24px; height: 25px; margin: 2px 5px 0 12px; border: 2px solid #555; border-radius: 2px; background: linear-gradient(#bbb, #999); }
.orow .lab { padding-top: 5px; color: #222; width: 82px; letter-spacing: 1.1px; }
.sc { margin-top: 11px; }
.orow2 { display: flex; align-items: center; margin: 4px 0 0 -18px; }
.tag { width: 52px; padding-top: 3px; }
.lay { width: 77px; margin-left: 13px; padding-top: 3px; letter-spacing: 1.1px; }
.select { height: 31px; border: 2px solid #5c5c5c; border-radius: 6px; background: linear-gradient(#c6c6c6, #a2a2a2); display: flex; align-items: center; justify-content: space-between; padding: 0 11px; font-size: 18px; letter-spacing: .95px; -webkit-text-stroke: .25px #0c0c0c; }
.s176 { width: 176px; }
.s174 { width: 174px; }
.comp { border-top: 2px solid #636363; }
.tr { height: 151px; }
.mf { height: 78px; }
.mr { height: 266px; }
.ctitle { height: 36px; display: grid; grid-template-columns: 25px 66px 375px 38px 28px; padding-left: 7px; align-items: center; letter-spacing: 1.15px; }
.ctitle > svg:first-child { margin-top: -2px; }
.ctitle b { overflow: hidden; padding: 6px 0 4px; font-size: 21px; }
.ci { display: flex; gap: 10px; align-items: center; }
.mf .ctitle { height: 35px; }
.mr .ctitle { height: 33px; }
.vec { display: grid; grid-template-columns: 127px 22px 108px 22px 112px 20px 100px; height: 33px; margin-bottom: 3px; padding-left: 30px; align-items: center; }
.vec .input { width: 100px; padding-top: 0; }
.vec > span:first-child { letter-spacing: 1px; }
.prop { height: 36px; display: grid; grid-template-columns: 235px 1fr 44px; padding-left: 30px; align-items: center; letter-spacing: 1.05px; }
.mf .prop { height: 33px; }
.obj-in { width: 240px; gap: 6px; padding-top: 0; letter-spacing: .9px; }
.prop > svg:last-child { margin-left: 16px; }
.prop .cb:last-child { margin-left: 1px; }
.wide { grid-column: 2 / 4; width: 276px; margin-top: -1px; }
.fold { grid-template-columns: 23px 1fr; padding-left: 7px; }
.prop.fold { padding-left: 7px; }
.ind { padding-left: 30px; }
.mat { height: 90px; background: linear-gradient(#aaa, #b2b2b2); border-top: 2px solid #555; border-bottom: 2px solid #777; display: flex; }
.mfold { margin: 59px 6px 0 10px; }
.ball { margin-top: 11px; }
.mat-main { margin: 5px 0 0 17px; flex: 1; }
.mrow { display: grid; grid-template-columns: 365px 38px 28px; align-items: center; height: 38px; }
.mname { font-size: 24px; letter-spacing: .5px; width: 351px; overflow: hidden; padding: 4px 0; color: #1c1c1c; }
.mrow2 { display: flex; align-items: center; gap: 8px; margin-top: 3px; }
.mrow2 .lab { width: 88px; letter-spacing: 1.1px; padding-top: 2px; }
.shader { width: 242px; }
.edit { width: 82px; padding: 0; justify-content: center; }
.gapbar { height: 14px; border-bottom: 2px solid #636363; }
.add { margin: 20px 0 0 44px; width: 460px; height: 44px; border: 2px solid #484848; border-radius: 5px; background: linear-gradient(#c4c4c4, #979797); display: flex; align-items: center; justify-content: center; font-size: 24px; letter-spacing: .9px; color: #1c1c1c; padding-left: 4px; }

.status { height: 43px; flex: none; display: flex; align-items: center; gap: 4px; padding: 6px 0 0 5px; }
.status svg { margin-top: -8px; }
.taskbar { height: 16px; flex: none; background: #000309; display: flex; overflow: hidden; color: #eee; }
.active { width: 96px; margin-left: 882px; background: #333437; }
.clock { margin: 12px 0 0 1702px; width: 191px; font: 20px/1 "Open Sans", sans-serif; height: 20px; }
.edge { width: 1px; background: #777; }
```
